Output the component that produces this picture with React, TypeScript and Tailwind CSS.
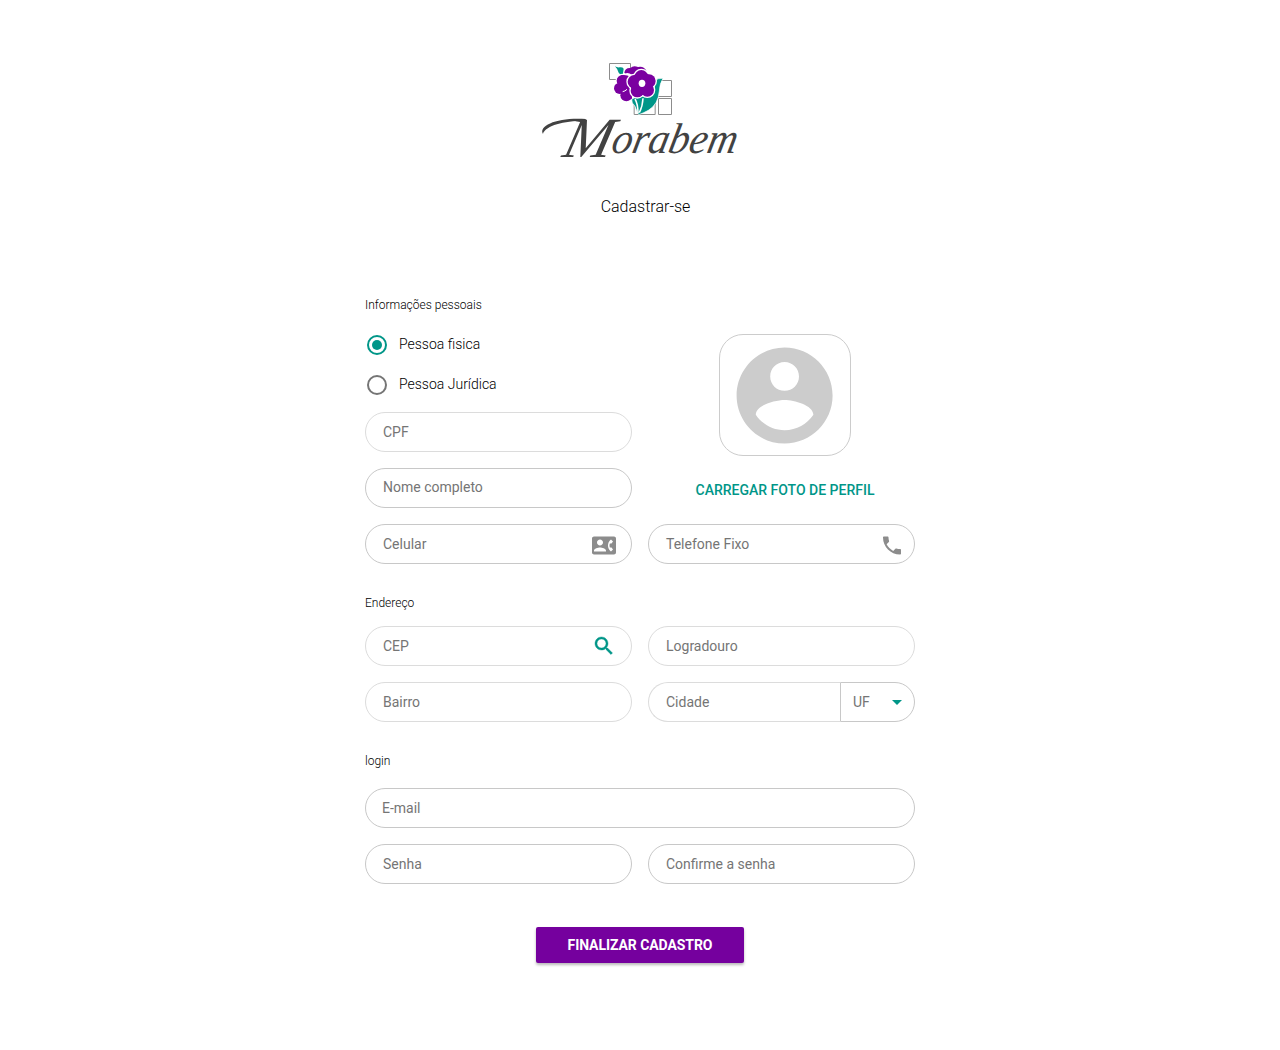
import type { ReactNode } from 'react';

function Icon({ d, className }: { d: string; className: string }) {
  return (
    <svg viewBox="0 0 24 24" className={className} fill="currentColor" aria-hidden="true">
      <path d={d} />
    </svg>
  );
}

const icons = {
  account:
    'M12 2C6.48 2 2 6.48 2 12s4.48 10 10 10 10-4.48 10-10S17.52 2 12 2zm0 3c1.66 0 3 1.34 3 3s-1.34 3-3 3-3-1.34-3-3 1.34-3 3-3zm0 14.2c-2.5 0-4.71-1.28-6-3.22.03-1.99 4-3.08 6-3.08 1.99 0 5.97 1.09 6 3.08-1.29 1.94-3.5 3.22-6 3.22z',
  contact:
    'M22 3H2C.9 3 0 3.9 0 5v14c0 1.1.9 2 2 2h20c1.1 0 1.99-.9 1.99-2L24 5c0-1.1-.9-2-2-2zM8 6c1.66 0 3 1.34 3 3s-1.34 3-3 3-3-1.34-3-3 1.34-3 3-3zm6 12H2v-1c0-2 4-3.1 6-3.1s6 1.1 6 3.1v1zm3.85-4h1.64L21 16l-1.99 1.99c-1.31-.98-2.28-2.38-2.73-3.99-.18-.64-.28-1.31-.28-2s.1-1.36.28-2c.45-1.62 1.42-3.01 2.73-3.99L21 8l-1.51 2h-1.64c-.22.63-.35 1.3-.35 2s.13 1.37.35 2z',
  phone:
    'M6.62 10.79c1.44 2.83 3.76 5.14 6.59 6.59l2.2-2.2c.27-.27.67-.36 1.02-.24 1.12.37 2.33.57 3.57.57.55 0 1 .45 1 1V20c0 .55-.45 1-1 1-9.39 0-17-7.61-17-17 0-.55.45-1 1-1h3.5c.55 0 1 .45 1 1 0 1.25.2 2.45.57 3.57.11.35.03.74-.25 1.02l-2.2 2.2z',
  search:
    'M15.5 14h-.79l-.28-.27C15.41 12.59 16 11.11 16 9.5 16 5.91 13.09 3 9.5 3S3 5.91 3 9.5 5.91 16 9.5 16c1.61 0 3.09-.59 4.23-1.57l.27.28v.79l5 4.99L20.49 19l-4.99-5zm-6 0C7.01 14 5 11.99 5 9.5S7.01 5 9.5 5 14 7.01 14 9.5 11.99 14 9.5 14z',
  arrow: 'M7 10l5 5 5-5z',
};

const petals = [
  [124, 56],
  [147, 69],
  [142, 96],
  [112, 98],
  [103, 71],
];

function Flower() {
  return (
    <svg viewBox="0 0 240 180" className="h-[60px] w-[80px]" aria-hidden="true">
      <path
        d="M28.5 16.5h63v48h-63zM172.500 67.500h42v48h-42zM102.500 121.500h63v48h-63zM175.500 121.500h39v48h-39z"
        fill="none"
        stroke="#8c8c8c"
        strokeWidth="3"
      />
      <path d="M45 25q6 4 14 3 9-1 12 4l-3 20q-8-2-12-8-3-11-11-19z" fill="#009688" />
      <path
        d="M189 61q-10 16-11 38-3 40-33 58-14 8-29 13-5-8-8-18-3-10-11-17l-2-11 24-13 36-9q8-16 11-34 6-8 23-7z"
        fill="#009688"
        stroke="#fff"
        strokeWidth="2"
      />
      <path d="M105 123q9 15 9 43M129 121q-1 24-11 43" stroke="#fff" strokeWidth="4.500" fill="none" />
      <g fill="#7a00a0">
        <path d="M73 44q2-15 18-14 9-9 23-3 17-4 25 11l-3 18-40 10z" />
        <g fill="#fff">
          <circle cx="67" cy="67" r="20" />
          <circle cx="82" cy="63" r="18" />
        </g>
        <circle cx="67" cy="68" r="17" />
        <circle cx="59" cy="91" r="17" />
        <circle cx="79" cy="112" r="18" />
        <path d="M64 51q20-2 32 9v62H76L56 98z" />
      </g>
      <g fill="#fff">
        <circle cx="125" cy="77" r="36" />
        {petals.map(([x, y]) => (
          <circle key={`${x}-${y}`} cx={x} cy={y} r="24" />
        ))}
      </g>
      <g fill="#7a00a0">
        <circle cx="125" cy="77" r="34" />
        {petals.map(([x, y]) => (
          <circle key={`${x}-${y}`} cx={x} cy={y} r="20" />
        ))}
      </g>
      <path d="M68 101q7-1 13-7" stroke="#fff" strokeWidth="3" fill="none" />
      <ellipse cx="126" cy="76" rx="10" ry="11" fill="#fff" />
    </svg>
  );
}

function Logo() {
  return (
    <div className="flex flex-col items-center">
      <Flower />
      <svg
        viewBox="0 0 210 58"
        className="-mt-[4px] h-[58px] w-[210px] overflow-visible"
        fontFamily="'Liberation Serif', serif"
        fontStyle="italic"
        fill="#424242"
      >
        <path d="M8 20C3 11 24 3 51 5L50 7C27 6 9 13 8 20z" />
        <text transform="translate(26 43) skewX(-14)" fontSize="57" textLength="48" lengthAdjust="spacingAndGlyphs">
          M
        </text>
        <text transform="translate(75 39) skewX(-12)" fontSize="43" textLength="125" lengthAdjust="spacingAndGlyphs">
          orabem
        </text>
      </svg>
    </div>
  );
}

function Field({
  label,
  faint,
  className = '',
  textClass = '',
  children,
}: {
  label: string;
  faint?: boolean;
  className?: string;
  textClass?: string;
  children?: ReactNode;
}) {
  return (
    <div
      className={`flex h-10 items-center justify-between rounded-full border pl-[17px] text-sm text-[#757575] ${
        faint ? 'border-[#dcdcdc]' : 'border-[#c8c8c8]'
      } ${className}`}
    >
      <span className={textClass}>{label}</span>
      {children}
    </div>
  );
}

function Radio({ label, checked }: { label: string; checked?: boolean }) {
  return (
    <div className="flex h-10 items-center pl-0.5">
      <span
        className={`mt-0.5 flex size-5 items-center justify-center rounded-full border-2 ${
          checked ? 'border-[#009688]' : 'border-[#757575]'
        }`}
      >
        {checked && <span className="size-2.5 rounded-full bg-[#009688]" />}
      </span>
      <span className="ml-3 text-sm font-light text-black">{label}</span>
    </div>
  );
}

function Heading({ children }: { children: ReactNode }) {
  return <h2 className="h-4 text-xs leading-4 font-light text-black">{children}</h2>;
}

export default function App() {
  return (
    <main className="flex min-h-[1050px] flex-col items-center bg-white pt-[58px] font-['Roboto',sans-serif]">
      <Logo />
      <h1 className="mt-[23px] ml-[11px] h-6 text-base leading-6 font-light text-black">Cadastrar-se</h1>
      <form className="mt-[78px] flex w-[550px] flex-col">
        <Heading>Informações pessoais</Heading>
        <div className="mt-[11px] grid grid-cols-2 gap-x-4">
          <div>
            <Radio label="Pessoa fisica" checked />
            <Radio label="Pessoa Jurídica" />
            <Field label="CPF" faint className="mt-2" />
            <Field label="Nome completo" className="mt-4" textClass="-mt-0.5" />
          </div>
          <div className="flex flex-col items-center pt-[10px] pl-[7px]">
            <div className="flex h-[122px] w-[132px] items-center justify-center rounded-3xl border border-[#cccccc] pt-px">
              <Icon d={icons.account} className="size-[115.2px] shrink-0 text-[#cccccc]" />
            </div>
            <button type="button" className="mt-6 h-5 text-sm leading-5 font-medium text-[#009688]">
              CARREGAR FOTO DE PERFIL
            </button>
          </div>
        </div>
        <div className="mt-4 grid grid-cols-2 gap-4">
          <Field label="Celular" className="pr-[15px]">
            <Icon d={icons.contact} className="mt-[3px] size-6 -translate-y-[0.5px] text-[#8c8c8c]" />
          </Field>
          <Field label="Telefone Fixo" className="pr-[10px]">
            <Icon d={icons.phone} className="mt-[3px] size-6 -translate-y-[0.5px] text-[#8c8c8c]" />
          </Field>
        </div>

        <div className="mt-[31px]">
          <Heading>Endereço</Heading>
        </div>
        <div className="mt-[15px] grid grid-cols-2 gap-4">
          <Field label="CEP" faint className="pr-[15px]">
            <svg viewBox="0 0 24 24" className="size-6 text-[#009688]" fill="currentColor" stroke="currentColor" strokeWidth="0.4">
              <path d={icons.search} />
            </svg>
          </Field>
          <Field label="Logradouro" faint />
          <Field label="Bairro" faint />
          <div className="flex">
            <Field label="Cidade" faint className="w-[192px] rounded-r-none border-r-0" />
            <div className="flex h-10 w-[75px] items-center justify-between rounded-r-full border border-[#c8c8c8] pr-[5px] pl-[12px] text-sm text-[#757575]">
              UF
              <Icon d={icons.arrow} className="size-6 text-[#009688]" />
            </div>
          </div>
        </div>

        <div className="mt-[31px]">
          <Heading>login</Heading>
        </div>
        <div className="mt-[19px] grid grid-cols-2 gap-4">
          <Field label="E-mail" className="col-span-2" textClass="-ml-px" />
          <Field label="Senha" />
          <Field label="Confirme a senha" />
        </div>
        <button
          type="button"
          className="mt-[43px] h-9 w-[208px] self-center rounded-xs bg-[#75009e] text-sm font-bold tracking-[-0.07px] text-white shadow-[0_2px_3px_rgba(0,0,0,0.28)]"
        >
          FINALIZAR CADASTRO
        </button>
      </form>
    </main>
  );
}
